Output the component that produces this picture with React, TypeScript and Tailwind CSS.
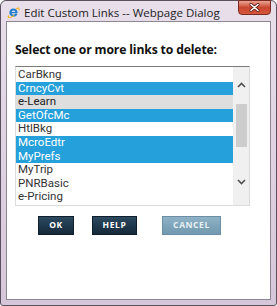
const items = [
  { name: "CarBkng", state: "none" },
  { name: "CrncyCvt", state: "sel" },
  { name: "e-Learn", state: "hover" },
  { name: "GetOfcMc", state: "sel" },
  { name: "HtlBkg", state: "none" },
  { name: "McroEdtr", state: "sel" },
  { name: "MyPrefs", state: "sel" },
  { name: "MyTrip", state: "none" },
  { name: "PNRBasic", state: "none" },
  { name: "e-Pricing", state: "none" },
];

function IeIcon() {
  return (
    <svg width="13" height="13" viewBox="0 0 16 16">
      <path d="M8 3a5 5 0 1 0 4.8 6.4H10a2.4 2.4 0 0 1-4.4-.4h7.3A5 5 0 0 0 8 3zm-2.3 4.3a2.4 2.4 0 0 1 4.6 0z" fill="#1e7fd0" />
      <path d="M2 11.5C0 15 4 15 9 11.5M11 4c3-2.5 5-2 3.5 1.5" stroke="#f2b01e" strokeWidth="1.4" fill="none" />
    </svg>
  );
}

export default function App() {
  return (
    <div className="w-[277px] h-[306px] flex flex-col border border-[#5a5060] rounded-t-[6px] rounded-b-[3px] bg-gradient-to-b from-[#e8dfea] to-[#d6c6da] font-['Open_Sans',sans-serif]">
      {/* title bar */}
      <div className="flex h-[20px] items-start">
        <div className="flex items-center gap-[4px] pl-[6px] pt-[5px]">
          <IeIcon />
          <span className="text-[11.5px] leading-[13px] text-[#1c1c1c]">Edit Custom Links -- Webpage Dialog</span>
        </div>
        <div className="ml-auto mr-[5px] mt-[-1px] w-[33px] h-[15px] rounded-b-[4px] border border-[#7a2a22] bg-gradient-to-b from-[#e9a393] via-[#c9462f] to-[#d6573c] flex items-center justify-center">
          <svg width="11" height="9" viewBox="0 0 11 9">
            <path d="M2 1.5l7 6M9 1.5l-7 6" stroke="#5a2018" strokeWidth="3" strokeLinecap="round" />
            <path d="M2 1.5l7 6M9 1.5l-7 6" stroke="#ffffff" strokeWidth="1.6" strokeLinecap="round" />
          </svg>
        </div>
      </div>

      {/* client area */}
      <div className="flex-1 mx-[5px] mb-[5px] border border-[#8e8592] bg-white flex flex-col pl-[8px] pt-[19px]">
        <p className="text-[12.2px] leading-[17px] font-bold text-[#111] tracking-[-0.15px]">
          Select one or more links to delete:
        </p>
        <div className="mt-[8px] w-[235px] h-[140px] border border-[#dcdcdc] border-t-[#7a7a7a] flex">
          <div className="flex-1 pt-[1px] font-['Roboto',sans-serif]">
            {items.map((it) => (
              <div
                key={it.name}
                className={
                  "h-[13.6px] leading-[13.6px] pl-[2px] text-[11.5px] " +
                  (it.state === "sel"
                    ? "bg-[#26a0da] text-white"
                    : it.state === "hover"
                    ? "bg-[#dedede] text-[#222]"
                    : "text-[#333]")
                }
              >
                {it.name}
              </div>
            ))}
          </div>
          <div className="w-[16px] bg-[#f0f0f0] flex flex-col items-center pt-[15px]">
            <svg width="9" height="6" viewBox="0 0 9 6">
              <path d="M1 5l3.5-3.5L8 5" stroke="#505050" strokeWidth="1.6" fill="none" />
            </svg>
            <div className="mt-[16px] w-[11px] h-[43px] bg-[#cdcdcd]" />
            <svg className="mt-[32px]" width="9" height="6" viewBox="0 0 9 6">
              <path d="M1 1l3.5 3.5L8 1" stroke="#505050" strokeWidth="1.6" fill="none" />
            </svg>
          </div>
        </div>
        <div className="flex mt-[10px] pl-[23px] gap-[18px]">
          <div className="w-[36px] h-[19px] bg-gradient-to-b from-[#2c4a60] to-[#16293a] border border-[#0e1e2c] text-white text-[8.5px] font-bold tracking-[0.6px] flex items-center justify-center">OK</div>
          <div className="w-[45px] h-[19px] bg-gradient-to-b from-[#2c4a60] to-[#16293a] border border-[#0e1e2c] text-white text-[8.5px] font-bold tracking-[0.6px] flex items-center justify-center">HELP</div>
          <div className="ml-[7px] w-[59px] h-[19px] bg-gradient-to-b from-[#8fb2c6] to-[#7198ae] border border-[#6a8fa4] text-[#e8f0f4] text-[8.5px] font-bold tracking-[0.6px] flex items-center justify-center">CANCEL</div>
        </div>
      </div>
    </div>
  );
}
